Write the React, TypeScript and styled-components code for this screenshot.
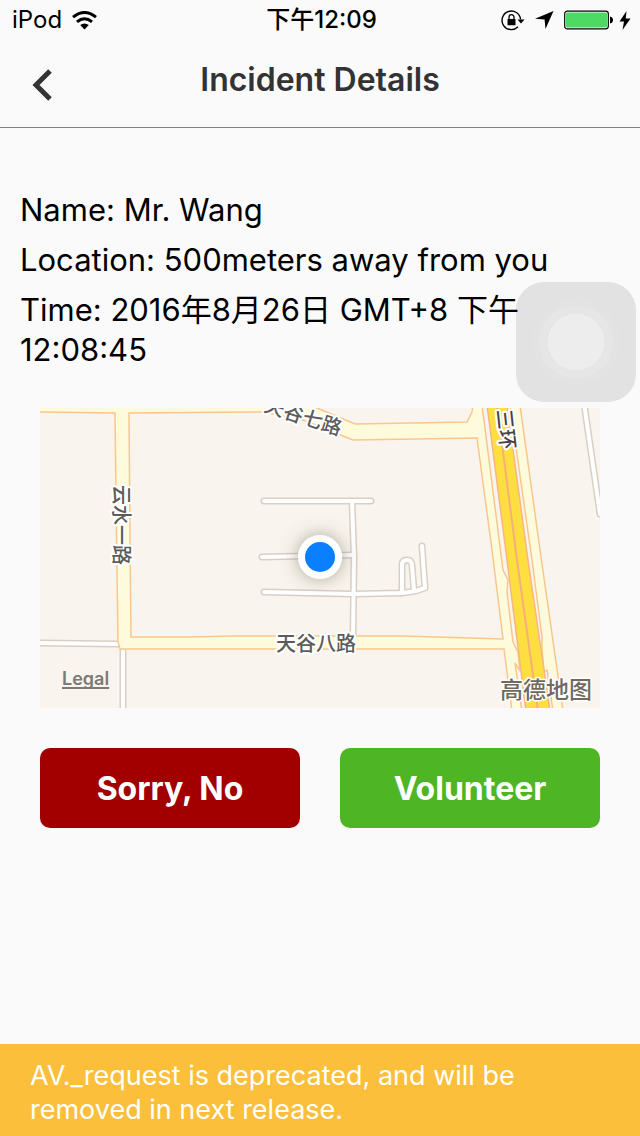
import React from "react";
import styled, { createGlobalStyle } from "styled-components";

const GlobalStyle = createGlobalStyle`
  *, *::before, *::after { box-sizing: border-box; }
  body {
    margin: 0;
    background: #fafafa;
    color: #000;
    font-family: Inter, "Noto Sans CJK SC", sans-serif;
  }
`;

const Screen = styled.div`
  position: relative;
  display: flex;
  flex-direction: column;
  min-height: 100vh;
`;

const StatusBar = styled.div`
  display: grid;
  grid-template-columns: 1fr auto 1fr;
  align-items: center;
  height: 40px;
  padding: 0 9px 0 12px;
  font-size: 24px;
  line-height: 40px;
`;

const StatusGroup = styled.div<{ $end?: boolean }>`
  display: flex;
  align-items: center;
  justify-content: ${(p) => (p.$end ? "flex-end" : "flex-start")};
  gap: 10px;
`;

const Clock = styled.time`
  font-weight: 500;
`;

const BatteryGroup = styled.span`
  display: flex;
  align-items: center;
  gap: 5px;
`;

const Header = styled.header`
  display: grid;
  grid-template-columns: 84px 1fr 84px;
  height: 88px;
  border-bottom: 1px solid #828282;
  color: #333;
`;

const BackButton = styled.button`
  display: flex;
  align-items: center;
  justify-content: center;
  padding: 2px 0 0;
  border: 0;
  background: none;
  color: inherit;
`;

const Title = styled.h1`
  margin: 0;
  font-size: 32px;
  font-weight: 600;
  line-height: 80px;
  text-align: center;
`;

const Details = styled.main`
  padding: 62px 20px 0;
`;

const Line = styled.p`
  position: relative;
  z-index: 2;
  margin: 0 0 10px;
  font-size: 31px;
  line-height: 40px;
`;

const MapFrame = styled.section`
  position: relative;
  height: 300px;
  margin: 38px 20px 0;
  overflow: hidden;
  background: #f9f4ed;
`;

const MapDrawing = styled.svg`
  display: block;
  width: 100%;
  height: 100%;
`;

const LegalLink = styled.a`
  position: absolute;
  left: 22px;
  bottom: 18px;
  color: #7b7a76;
  font-size: 18px;
  font-weight: 600;
  line-height: 22px;
  text-decoration-thickness: 2px;
  text-decoration-skip-ink: none;
  text-underline-offset: 2px;
`;

const Actions = styled.div`
  display: grid;
  grid-template-columns: 1fr 1fr;
  gap: 40px;
  margin: 40px 20px;
`;

const ActionButton = styled.button<{ $color: string }>`
  height: 80px;
  border: 0;
  border-radius: 10px;
  background: ${(p) => p.$color};
  color: #fff;
  font-family: inherit;
  font-size: 32px;
  font-weight: 700;
`;

const AssistiveTouch = styled.button`
  position: absolute;
  z-index: 1;
  top: 282px;
  right: 4px;
  display: grid;
  place-items: center;
  width: 120px;
  height: 120px;
  padding: 0;
  border: 0;
  border-radius: 28px;
  background: #e2e2e2;
`;

const Warning = styled.div`
  margin-top: auto;
  padding: 15px 30px 9px;
  background: #fbbf3b;
  color: #fff;
  font-size: 27px;
  line-height: 34px;
`;

const streets = [
  "M224 93H331",
  "M222 149L313 147",
  "M312 93L314 150L313 230",
  "M224 184L313 186L362 185L376 183L385 180L382 138",
  "M362 185V157Q362 152 367 152Q372 152 372 158L374 182",
  "M-5 235L79 236",
  "M83 243V305",
  "M544 -5L560 106",
];

const road =
  "M-3 -8L-3 4L75 5L76 90L78 234L80 241L464 241L472 303L482 303L475 255L480 263L478 244L473 234L467 184L468 172L463 162L442 -3L433 -3L432 4L427 14L315 16L277 0L260 -8Z";

const block =
  "M89 5L224 4L263 12L313 32L437 30L452 142L463 231L362 228H195L147 229H91L90 130Z";

function IncidentMap() {
  return (
    <MapDrawing viewBox="0 0 560 300" preserveAspectRatio="xMidYMid slice" role="img" aria-label="Incident map">
      <defs>
        <filter id="pinShadow" x="-60%" y="-60%" width="220%" height="220%">
          <feDropShadow dx="0" dy="0" stdDeviation="9" floodColor="#6b6250" floodOpacity="0.55" />
        </filter>
      </defs>
      <rect width="560" height="300" fill="#f9f4ed" />
      <g fill="none" strokeLinecap="round" strokeLinejoin="round">
        {streets.map((d) => (
          <path key={d} d={d} stroke="#d9cfc5" strokeWidth="7" />
        ))}
        {streets.map((d) => (
          <path key={d} d={d} stroke="#fff" strokeWidth="4" />
        ))}
      </g>
      <g strokeWidth="1.5" stroke="#f9c78c">
        <path
          d={`${road}${block}`}
          fill="#fdfbdb"
          fillRule="evenodd"
        />
        <path d="M470 -3L492 152L502 229L502 242L504 264L507 262L513 303H523L500 142L480 -3Z" fill="#fdfbdb" />
        <path d="M447 -3L467 152L486 303H510L488 152L467 -3Z" fill="#ffdf40" stroke="#f6b685" />
        <path d="M457 -3L477 152L498 303" fill="none" stroke="#f5b07a" strokeWidth="2" />
      </g>
      <g
        fill="#5c5c5c"
        stroke="#fff"
        strokeWidth="4"
        strokeLinejoin="round"
        paintOrder="stroke"
        fontFamily='"Noto Sans CJK SC", sans-serif'
        fontSize="20"
        fontWeight="500"
      >
        <text transform="translate(223 3) rotate(18)">天谷七路</text>
        <text transform="translate(74 77) rotate(90)">云水一路</text>
        <text transform="translate(457 2) rotate(84)" fill="#444">三环</text>
        <text x="236" y="243">天谷八路</text>
        <text x="460" y="290" fontSize="23" fill="#6f6a5c" strokeWidth="3">高德地图</text>
      </g>
      <circle cx="280" cy="149" r="22" fill="#fff" filter="url(#pinShadow)" />
      <circle cx="280" cy="149" r="15" fill="#0a7fff" />
    </MapDrawing>
  );
}

function WifiIcon() {
  return (
    <svg width="25" height="19" viewBox="0 0 25 19" aria-label="Wi-Fi">
      <g fill="none" stroke="#000" strokeWidth="3">
        <path d="M1 6.200Q12.500 -3.200 24 6.200" />
        <path d="M5 10.800Q12.500 4.600 20 10.800" />
      </g>
      <path d="M8.200 14Q12.500 10.800 16.800 14L12.500 18.500Z" />
    </svg>
  );
}

function RotationLockIcon() {
  return (
    <svg width="24" height="21" viewBox="0 0 24 21" aria-label="Rotation lock">
      <path d="M19.600 9.500A9.300 9.300 0 1 0 17 16.800" fill="none" stroke="#000" strokeWidth="1.400" />
      <path d="M16.500 9.500H23.500L20 13.500Z" />
      <rect x="6.500" y="9" width="8" height="6.300" rx="0.500" />
      <path d="M8 9.500V7.200A2.500 2.500 0 0 1 13 7.200V9.500" fill="none" stroke="#000" strokeWidth="1.300" />
    </svg>
  );
}

function LocationIcon() {
  return (
    <svg width="19" height="18" viewBox="0 0 19 18" aria-label="Location in use">
      <path d="M18.500 0L10.500 18L9.600 8.600L0 7.800Z" />
    </svg>
  );
}

function BatteryIcon() {
  return (
    <svg width="50" height="20" viewBox="0 0 50 20" aria-label="Battery full">
      <rect x="0.700" y="1.200" width="43.600" height="17.600" rx="2.500" fill="#fff" stroke="#000" strokeWidth="1.200" />
      <rect x="2" y="2.500" width="41" height="15" rx="1.200" fill="#4cd964" />
      <path d="M46 6.500Q49 7 49 10T46 13.500Z" />
    </svg>
  );
}

function BoltIcon() {
  return (
    <svg width="12" height="19" viewBox="0 0 12 19" aria-label="Charging">
      <path d="M7.500 0L0.500 10.600H5L3.500 19L11.500 7.600H6.800Z" />
    </svg>
  );
}

export default function App() {
  return (
    <Screen>
      <GlobalStyle />
      <StatusBar>
        <StatusGroup>
          <span>iPod</span>
          <WifiIcon />
        </StatusGroup>
        <Clock>下午12:09</Clock>
        <StatusGroup $end>
          <RotationLockIcon />
          <LocationIcon />
          <BatteryGroup>
            <BatteryIcon />
            <BoltIcon />
          </BatteryGroup>
        </StatusGroup>
      </StatusBar>
      <Header>
        <BackButton type="button" aria-label="Back">
          <svg width="20" height="32" viewBox="0 0 20 32" fill="none" stroke="currentColor" strokeWidth="5">
            <path d="M18 2L4 16L18 30" />
          </svg>
        </BackButton>
        <Title>Incident Details</Title>
      </Header>
      <Details>
        <Line>Name: Mr. Wang</Line>
        <Line>Location: 500meters away from you</Line>
        <Line>Time: 2016年8月26日 GMT+8 下午12:08:45</Line>
        <MapFrame>
          <IncidentMap />
          <LegalLink href="#legal">Legal</LegalLink>
        </MapFrame>
        <Actions>
          <ActionButton type="button" $color="#a20000">Sorry, No</ActionButton>
          <ActionButton type="button" $color="#4eb624">Volunteer</ActionButton>
        </Actions>
      </Details>
      <AssistiveTouch type="button" aria-label="AssistiveTouch">
        <svg width="90" height="90" viewBox="0 0 90 90">
          <circle cx="45" cy="45" r="44" fill="#e3e3e3" />
          <circle cx="45" cy="45" r="37" fill="#e6e6e6" />
          <circle cx="45" cy="45" r="29" fill="#ededed" stroke="#e4e4e4" />
        </svg>
      </AssistiveTouch>
      <Warning role="status">AV._request is deprecated, and will be removed in next release.</Warning>
    </Screen>
  );
}
